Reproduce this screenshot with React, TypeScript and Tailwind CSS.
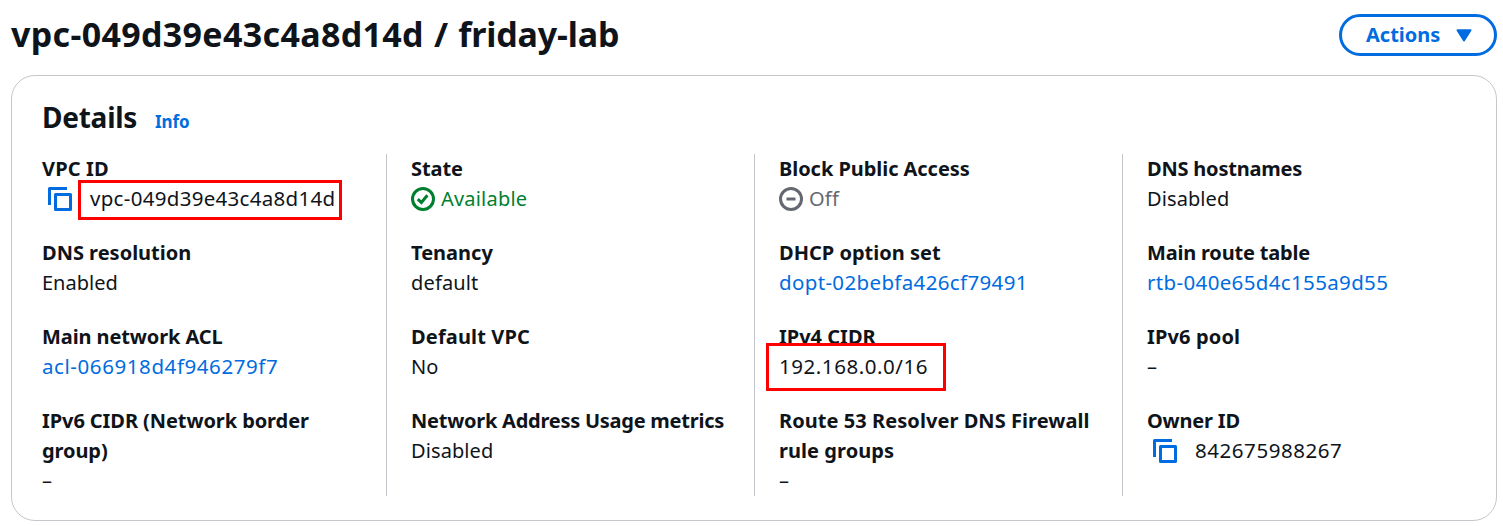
import type { ReactNode } from 'react';

function CopyIcon() {
  return (
    <svg className="ml-[6px] mr-[18px] h-6 w-6 shrink-0 translate-y-px" viewBox="0 0 24 24" fill="none" stroke="#006ce0" strokeWidth="3" strokeLinejoin="round">
      <path d="M1.5 18V1.5H19" />
      <path d="M7.5 7.5h15v15h-15z" />
    </svg>
  );
}

function CheckIcon() {
  return (
    <svg className="mr-[6px] h-6 w-6 shrink-0" viewBox="0 0 24 24" fill="none" stroke="currentColor" strokeWidth="3">
      <circle cx="12" cy="12" r="10.5" />
      <path d="M6.8 12.1l3.6 3.4 6-7.2" />
    </svg>
  );
}

function MinusIcon() {
  return (
    <svg className="mr-[6px] h-6 w-6 shrink-0" viewBox="0 0 24 24" fill="none" stroke="currentColor" strokeWidth="3">
      <circle cx="12" cy="12" r="10.5" />
      <path d="M7.5 12h9" />
    </svg>
  );
}

function Field({ label, track = '', valueClass = 'text-[20px]', children }: { label: ReactNode; track?: string; valueClass?: string; children: ReactNode }) {
  return (
    <div>
      <dt className={`whitespace-nowrap text-[20px] font-bold ${track}`}>{label}</dt>
      <dd className={`relative flex h-[30px] items-center whitespace-nowrap ${valueClass}`}>{children}</dd>
    </div>
  );
}

function Column({ first, children }: { first?: boolean; children: ReactNode }) {
  return (
    <dl className={first ? 'flex h-[342px] flex-col gap-6' : 'flex h-[342px] flex-col gap-6 border-l border-[#c6c6cd] pl-6'}>
      {children}
    </dl>
  );
}

function Link({ children }: { children: ReactNode }) {
  return <a className="text-[#006ce0]" href="#">{children}</a>;
}

export default function App() {
  return (
    <main className="h-[526px] w-[1503px] overflow-hidden bg-white pl-[11px] pr-[6px] font-['Noto_Sans','Open_Sans',sans-serif] text-[20px] leading-[30px] text-[#0f141a]">
      <header className="flex h-[75px] items-start justify-between">
        <h1 className="mt-[12px] whitespace-nowrap text-[34px] font-bold leading-[45px] tracking-[-0.15px] [word-spacing:1.5px]">
          <span className="tracking-[0.33px]">vpc-049d39e43c4a8d14d</span> / friday-lab
        </h1>
        <button className="mt-[14px] flex h-[42px] w-[158px] items-center rounded-full border-[3px] border-[#006ce0] pl-[24px] text-[20px] font-bold text-[#006ce0]">
          <span className="w-[90px] text-left">Actions</span>
          <svg className="h-[13px] w-4" viewBox="0 0 16 13" fill="currentColor" stroke="currentColor" strokeWidth="2" strokeLinejoin="round">
            <path d="M1.5 1.3h13L8 11.5z" />
          </svg>
        </button>
      </header>
      <section className="h-[446px] rounded-[24px] border border-[#c6c6cd] pl-[30px] pt-[23px]">
        <div className="flex h-[55px] items-baseline gap-[18px]">
          <h2 className="w-[95px] text-[28px] font-bold leading-[36px] tracking-[-0.25px]">Details</h2>
          <a className="text-[17px] font-bold tracking-[-0.1px] text-[#006ce0]" href="#">Info</a>
        </div>
        <div className="grid grid-cols-[344px_368px_368px_368px]">
          <Column first>
            <Field label="VPC ID" track="tracking-[0.13px]" valueClass="text-[20.5px] pb-[2px] tracking-[0.3px]">
              <CopyIcon />vpc-049d39e43c4a8d14d
              <div className="absolute left-[36px] top-[-4px] h-[40px] w-[264px] border-[3px] border-[#fe0000]" />
            </Field>
            <Field label="DNS resolution">Enabled</Field>
            <Field label="Main network ACL" track="tracking-[-0.1px]" valueClass="text-[20.5px] pb-[2px] tracking-[0.58px]"><Link>acl-066918d4f946279f7</Link></Field>
            <Field label={<>IPv6 CIDR (Network border<br />group)</>} track="tracking-[-0.08px]">–</Field>
          </Column>
          <Column>
            <Field label="State" track="tracking-[-0.08px]" valueClass="text-[20px] tracking-[0.2px]"><span className="flex items-center text-[#00802f]"><CheckIcon />Available</span></Field>
            <Field label="Tenancy" valueClass="text-[20px] tracking-[0.15px]">default</Field>
            <Field label="Default VPC" track="tracking-[0.15px]">No</Field>
            <Field label="Network Address Usage metrics" track="tracking-[-0.25px]" valueClass="text-[20px] tracking-[0.1px]">Disabled</Field>
          </Column>
          <Column>
            <Field label="Block Public Access" track="tracking-[-0.05px]" valueClass="text-[20px] tracking-[0.2px]"><span className="flex items-center text-[#656871]"><MinusIcon />Off</span></Field>
            <Field label="DHCP option set" valueClass="text-[20.5px] pb-[2px] tracking-[0.35px]"><Link>dopt-02bebfa426cf79491</Link></Field>
            <Field label="IPv4 CIDR" valueClass="text-[20.5px] pb-[2px] tracking-[0.55px]">
              <div className="absolute left-[-13px] top-[-9px] h-[48px] w-[180px] border-[3px] border-[#fe0000] bg-white" />
              <span className="relative">192.168.0.0/16</span>
            </Field>
            <Field label={<>Route 53 Resolver DNS Firewall<br />rule groups</>} track="tracking-[0.06px]">–</Field>
          </Column>
          <Column>
            <Field label="DNS hostnames" track="tracking-[-0.2px]" valueClass="text-[20px] tracking-[0.1px]">Disabled</Field>
            <Field label="Main route table" track="tracking-[-0.2px]" valueClass="text-[20.5px] pb-[2px] tracking-[0.35px]"><Link>rtb-040e65d4c155a9d55</Link></Field>
            <Field label="IPv6 pool" track="tracking-[0.15px]">–</Field>
            <Field label="Owner ID" track="tracking-[-0.2px]" valueClass="text-[20.5px] pb-[2px] tracking-[0.55px]"><CopyIcon />842675988267</Field>
          </Column>
        </div>
      </section>
    </main>
  );
}
